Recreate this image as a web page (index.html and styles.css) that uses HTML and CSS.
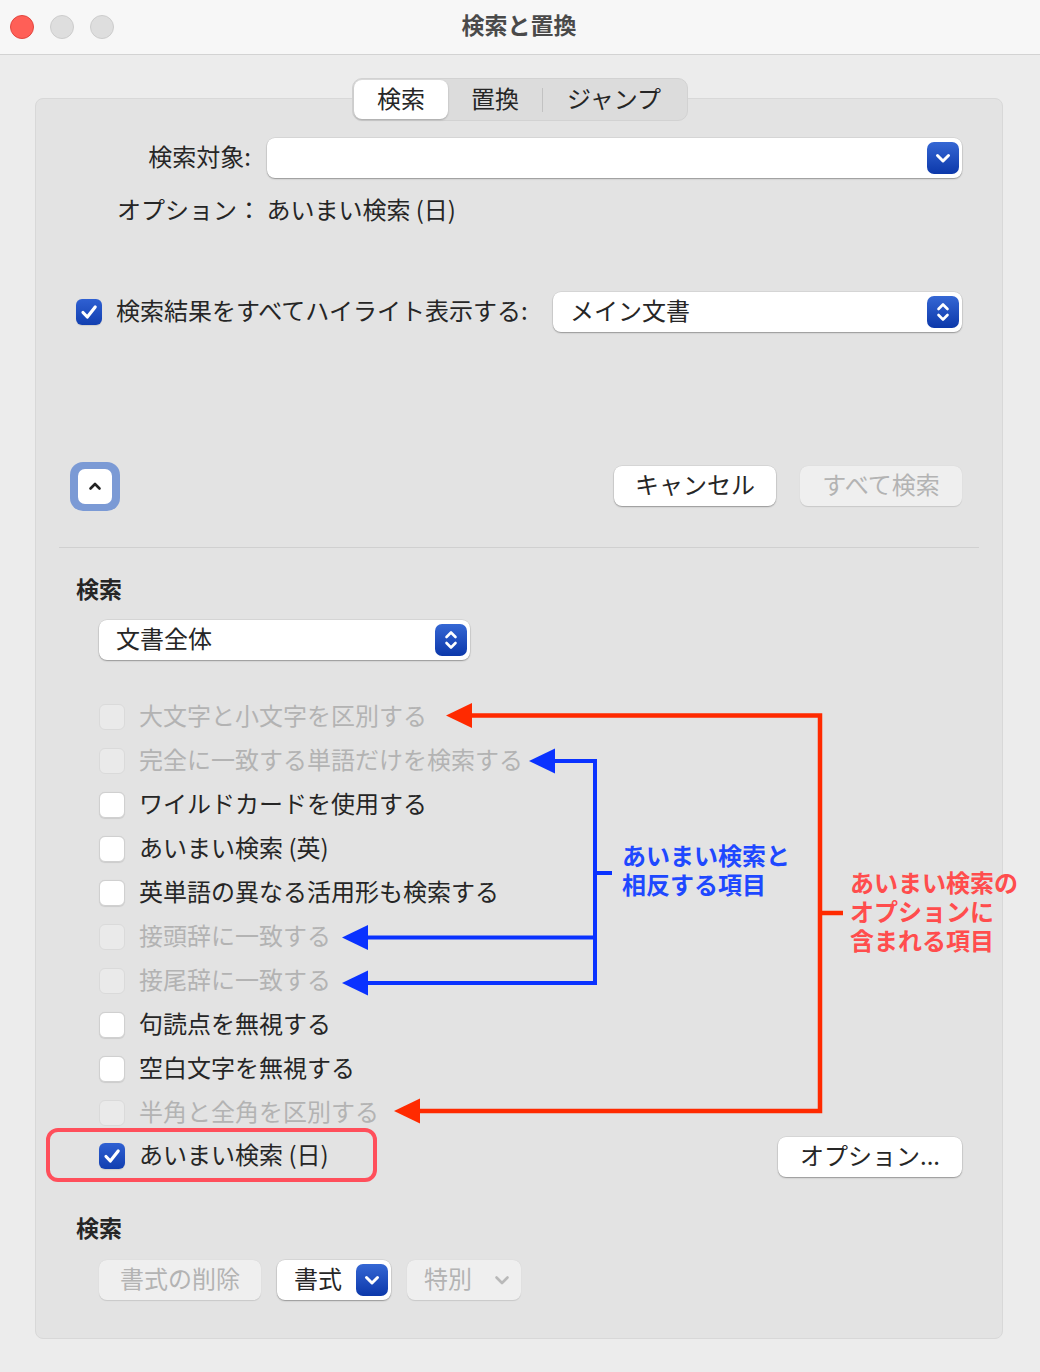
FILE: index.html
```html
<!DOCTYPE html>
<html lang="ja">
<head>
    <meta charset="UTF-8">
    <title>検索と置換</title>
    <link rel="stylesheet" href="styles.css">
</head>
<body>
    <div class="window">
        <!-- タイトルバー -->
        <div class="titlebar">
            <div class="lights">
                <span class="light close"></span>
                <span class="light"></span>
                <span class="light"></span>
            </div>
            <div class="title">検索と置換</div>
        </div>

        <div class="content">
            <div class="tabs">
                <div class="tab active">検索</div>
                <div class="tab">置換</div>
                <div class="tab-sep"></div>
                <div class="tab wide">ジャンプ</div>
            </div>

            <div class="panel">
                <div class="row-target">
                    <div class="label">検索対象:</div>
                    <div class="combo">
                        <span class="blue-btn">
                            <svg width="32" height="32" viewBox="0 0 32 32"><path d="M10.5 13.5 L16 19 L21.5 13.5" fill="none" stroke="#fff" stroke-width="3" stroke-linecap="round" stroke-linejoin="round"/></svg>
                        </span>
                    </div>
                </div>
                <div class="option-line">オプション： あいまい検索 (日)</div>

                <div class="row-highlight">
                    <span class="check checked">
                        <svg width="26" height="26" viewBox="0 0 26 26"><path d="M7 13.5 L11.3 18 L19.2 8" fill="none" stroke="#fff" stroke-width="3.2" stroke-linecap="round" stroke-linejoin="round"/></svg>
                    </span>
                    <span class="check-label">検索結果をすべてハイライト表示する:</span>
                    <div class="popup popup-main">
                        <span class="popup-text">メイン文書</span>
                        <span class="blue-btn">
                            <svg width="32" height="32" viewBox="0 0 32 32"><path d="M11.5 13 L16 8.5 L20.5 13 M11.5 19 L16 23.5 L20.5 19" fill="none" stroke="#fff" stroke-width="2.6" stroke-linecap="round" stroke-linejoin="round"/></svg>
                        </span>
                    </div>
                </div>

                <div class="row-buttons">
                    <div class="focus-ring">
                        <span class="collapse-btn">
                            <svg width="34" height="34" viewBox="0 0 34 34"><path d="M12.5 19.5 L17 15 L21.5 19.5" fill="none" stroke="#222" stroke-width="2.6" stroke-linecap="round" stroke-linejoin="round"/></svg>
                        </span>
                    </div>
                    <button class="btn btn-cancel">キャンセル</button>
                    <button class="btn btn-disabled btn-all">すべて検索</button>
                </div>

                <div class="separator"></div>

                <div class="section-title">検索</div>
                <div class="popup popup-scope">
                    <span class="popup-text">文書全体</span>
                    <span class="blue-btn">
                        <svg width="32" height="32" viewBox="0 0 32 32"><path d="M11.5 13 L16 8.5 L20.5 13 M11.5 19 L16 23.5 L20.5 19" fill="none" stroke="#fff" stroke-width="2.6" stroke-linecap="round" stroke-linejoin="round"/></svg>
                    </span>
                </div>

                <!-- 検索オプションの一覧 -->
                <div class="options">
                    <div class="opt disabled"><span class="check"></span><span class="check-label">大文字と小文字を区別する</span></div>
                    <div class="opt disabled"><span class="check"></span><span class="check-label">完全に一致する単語だけを検索する</span></div>
                    <div class="opt"><span class="check"></span><span class="check-label">ワイルドカードを使用する</span></div>
                    <div class="opt"><span class="check"></span><span class="check-label">あいまい検索 (英)</span></div>
                    <div class="opt"><span class="check"></span><span class="check-label">英単語の異なる活用形も検索する</span></div>
                    <div class="opt disabled"><span class="check"></span><span class="check-label">接頭辞に一致する</span></div>
                    <div class="opt disabled"><span class="check"></span><span class="check-label">接尾辞に一致する</span></div>
                    <div class="opt"><span class="check"></span><span class="check-label">句読点を無視する</span></div>
                    <div class="opt"><span class="check"></span><span class="check-label">空白文字を無視する</span></div>
                    <div class="opt disabled"><span class="check"></span><span class="check-label">半角と全角を区別する</span></div>
                    <div class="opt opt-last">
                        <span class="mark-box"></span>
                        <span class="check checked">
                            <svg width="26" height="26" viewBox="0 0 26 26"><path d="M7 13.5 L11.3 18 L19.2 8" fill="none" stroke="#fff" stroke-width="3.2" stroke-linecap="round" stroke-linejoin="round"/></svg>
                        </span>
                        <span class="check-label">あいまい検索 (日)</span>
                        <button class="btn btn-options">オプション...</button>
                    </div>
                </div>

                <div class="section-title section-bottom">検索</div>
                <div class="bottom-buttons">
                    <button class="btn btn-disabled btn-clear">書式の削除</button>
                    <div class="popup popup-format">
                        <span class="popup-text">書式</span>
                        <span class="blue-btn">
                            <svg width="32" height="32" viewBox="0 0 32 32"><path d="M10.5 13.5 L16 19 L21.5 13.5" fill="none" stroke="#fff" stroke-width="3" stroke-linecap="round" stroke-linejoin="round"/></svg>
                        </span>
                    </div>
                    <div class="popup popup-special">
                        <span class="popup-text">特別</span>
                        <svg width="32" height="32" viewBox="0 0 32 32"><path d="M10.5 13.5 L16 19 L21.5 13.5" fill="none" stroke="#b9b9b9" stroke-width="2.6" stroke-linecap="round" stroke-linejoin="round"/></svg>
                    </div>
                </div>
            </div>
        </div>

        <!-- 注釈の矢印 -->
        <svg class="annotations" width="1040" height="1372" viewBox="0 0 1040 1372">
            <g fill="none" stroke="#ff2a00" stroke-width="4.5">
                <path d="M468 715.5 H820 V1111 H418"/>
                <path d="M820 913 H843"/>
            </g>
            <g fill="#ff2a00">
                <polygon points="446,715.5 472,703 472,728"/>
                <polygon points="394,1111 420,1098.5 420,1123.5"/>
            </g>
            <g fill="none" stroke="#0a32ff" stroke-width="4">
                <path d="M552 761 H595 V983 H365"/>
                <path d="M595 937.5 H365"/>
                <path d="M595 873 H612"/>
            </g>
            <g fill="#0a32ff">
                <polygon points="529,761 555,748.5 555,773.5"/>
                <polygon points="342,937.5 368,925 368,950"/>
                <polygon points="342,983 368,970.5 368,995.5"/>
            </g>
        </svg>
        <div class="note note-blue">あいまい検索と<br>相反する項目</div>
        <div class="note note-red">あいまい検索の<br>オプションに<br>含まれる項目</div>
    </div>
</body>
</html>
```

FILE: styles.css
```css
/* ウィンドウ全体 */
body {
    margin: 0;
    background: #ececec;
    font-family: "Noto Sans CJK JP", "Noto Sans", sans-serif;
    color: #262626;
}
.window {
    position: relative;
    width: 1040px;
    height: 1372px;
    background: #ececec;
    overflow: hidden;
}
.titlebar {
    display: grid;
    grid-template-columns: 1fr auto 1fr;
    align-items: center;
    height: 54px;
    background: #f7f7f7;
    border-bottom: 1px solid #d3d3d3;
}
.lights {
    display: flex;
    gap: 16px;
    padding-left: 10px;
}
.light {
    width: 22px;
    height: 22px;
    border-radius: 50%;
    background: #dedede;
    border: 1px solid #cdcdcd;
}
.light.close {
    background: #ff5f57;
    border-color: #e2463f;
}
.title {
    font-size: 23px;
    font-weight: bold;
    color: #4a4a4a;
    line-height: 30px;
    margin-top: -7px;
    margin-right: 2px;
}

.content {
    padding-top: 23px;
}
.tabs {
    position: relative;
    z-index: 1;
    display: flex;
    align-items: center;
    width: 336px;
    height: 43px;
    margin: 0 auto;
    box-sizing: border-box;
    background: #dcdcdc;
    border-radius: 10px;
    border: 1px solid #d2d2d2;
    padding: 1px;
}
.tab {
    width: 94px;
    height: 39px;
    box-sizing: border-box;
    padding-bottom: 4px;
    line-height: 35px;
    text-align: center;
    font-size: 24px;
    color: #262626;
}
.tab.active {
    background: #fff;
    border-radius: 8px;
    box-shadow: 0 1px 2px rgba(0, 0, 0, 0.25);
}
.tab.wide {
    width: 142px;
}
.tab-sep {
    width: 1px;
    height: 24px;
    background: #c2c2c2;
}

.panel {
    margin: -23px 37px 0 35px;
    height: 1241px;
    box-sizing: border-box;
    padding: 39px 40px 0 40px;
    background: #e3e3e3;
    border: 1px solid #d8d8d8;
    border-radius: 8px;
}

.row-target {
    display: flex;
    align-items: center;
    height: 40px;
}
.label {
    width: 175px;
    text-align: right;
    font-size: 24px;
    padding-bottom: 5px;
}
.combo {
    flex: 1;
    margin-left: 16px;
    height: 40px;
    box-sizing: border-box;
    display: flex;
    justify-content: flex-end;
    align-items: center;
    padding-right: 3px;
    background: #fff;
    border-radius: 8px;
    box-shadow: 0 1px 1.5px rgba(0, 0, 0, 0.3), 0 0 0 0.5px rgba(0, 0, 0, 0.1);
}
.blue-btn {
    display: block;
    width: 32px;
    height: 32px;
    border-radius: 7px;
    background: linear-gradient(#3567d4, #0c38aa);
}
.blue-btn svg {
    display: block;
}
.option-line {
    margin-top: 18px;
    padding-left: 41px;
    height: 26px;
    padding-bottom: 4px;
    line-height: 26px;
    font-size: 24px;
}

.row-highlight {
    display: flex;
    align-items: center;
    margin-top: 66px;
    height: 40px;
}
.check {
    flex: none;
    width: 26px;
    height: 26px;
    box-sizing: border-box;
    border-radius: 6px;
    background: #fff;
    border: 1px solid #d0d0d0;
    box-shadow: 0 0.5px 1px rgba(0, 0, 0, 0.1);
}
.check svg {
    display: block;
}
.check.checked {
    border: none;
    background: linear-gradient(#2f60d2, #123fb0);
}
.check-label {
    margin-left: 14px;
    font-size: 24px;
    line-height: 30px;
    padding-bottom: 4px;
    white-space: nowrap;
}
.popup {
    display: flex;
    align-items: center;
    justify-content: space-between;
    height: 40px;
    box-sizing: border-box;
    padding: 0 3px 0 17px;
    background: #fff;
    border-radius: 8px;
    box-shadow: 0 1px 1.5px rgba(0, 0, 0, 0.3), 0 0 0 0.5px rgba(0, 0, 0, 0.1);
}
.popup-text {
    font-size: 24px;
    line-height: 30px;
    padding-bottom: 4px;
}
.popup-main {
    width: 409px;
    margin-left: auto;
}

.row-buttons {
    display: flex;
    align-items: center;
    margin-top: 130px;
    height: 48px;
}
.focus-ring {
    margin-left: -6px;
    width: 50px;
    height: 49px;
    box-sizing: border-box;
    padding: 7px 8px;
    border-radius: 13px;
    background: #7b9ad5;
}
.collapse-btn {
    display: block;
    width: 34px;
    height: 35px;
    border-radius: 7px;
    background: #fff;
}
.collapse-btn svg {
    display: block;
}
.btn {
    height: 40px;
    border: none;
    border-radius: 8px;
    background: #fff;
    font-family: inherit;
    font-size: 24px;
    color: #262626;
    padding: 0 0 6px;
    box-shadow: 0 1px 1.5px rgba(0, 0, 0, 0.3), 0 0 0 0.5px rgba(0, 0, 0, 0.1);
}
.btn-disabled {
    background: #efefef;
    color: #b3b3b3;
    box-shadow: 0 0.5px 1px rgba(0, 0, 0, 0.12);
}
.btn-cancel {
    width: 162px;
    margin-left: auto;
}
.btn-all {
    width: 162px;
    margin-left: 24px;
}

.separator {
    margin: 37px -17px 0;
    height: 1px;
    background: #d0d0d0;
}
.section-title {
    margin-top: 27px;
    height: 26px;
    padding-bottom: 4px;
    line-height: 26px;
    font-size: 23px;
    font-weight: bold;
}
.popup-scope {
    width: 371px;
    margin: 15px 0 0 23px;
}

.options {
    margin-top: 35px;
    padding-left: 23px;
}
.opt {
    display: flex;
    align-items: center;
    height: 44px;
}
.opt.disabled .check {
    background: #eaeaea;
    border-color: #dadada;
    box-shadow: none;
}
.opt.disabled .check-label {
    color: #b3b3b3;
}
.opt-last {
    position: relative;
    height: 42px;
}
.mark-box {
    position: absolute;
    left: -53px;
    top: -7px;
    width: 331px;
    height: 54px;
    box-sizing: border-box;
    border: 4px solid #ff4f5b;
    border-radius: 12px;
}
.btn-options {
    width: 184px;
    margin-left: auto;
    margin-top: 2px;
}

.section-bottom {
    margin-top: 37px;
}
.bottom-buttons {
    display: flex;
    gap: 16px;
    margin: 16px 0 0 23px;
}
.btn-clear {
    width: 162px;
}
.popup-format {
    width: 114px;
}
.popup-special {
    width: 114px;
    background: #efefef;
    box-shadow: 0 0.5px 1px rgba(0, 0, 0, 0.12);
}
.popup-special .popup-text {
    color: #b3b3b3;
}

/* 注釈 */
.annotations {
    position: absolute;
    left: 0;
    top: 0;
    pointer-events: none;
}
.note {
    position: absolute;
    font-size: 24px;
    font-weight: bold;
    line-height: 29px;
    white-space: nowrap;
}
.note-blue {
    left: 622px;
    top: 840px;
    color: #1e48ff;
}
.note-red {
    left: 850px;
    top: 867px;
    color: #ff4d4d;
}
```
